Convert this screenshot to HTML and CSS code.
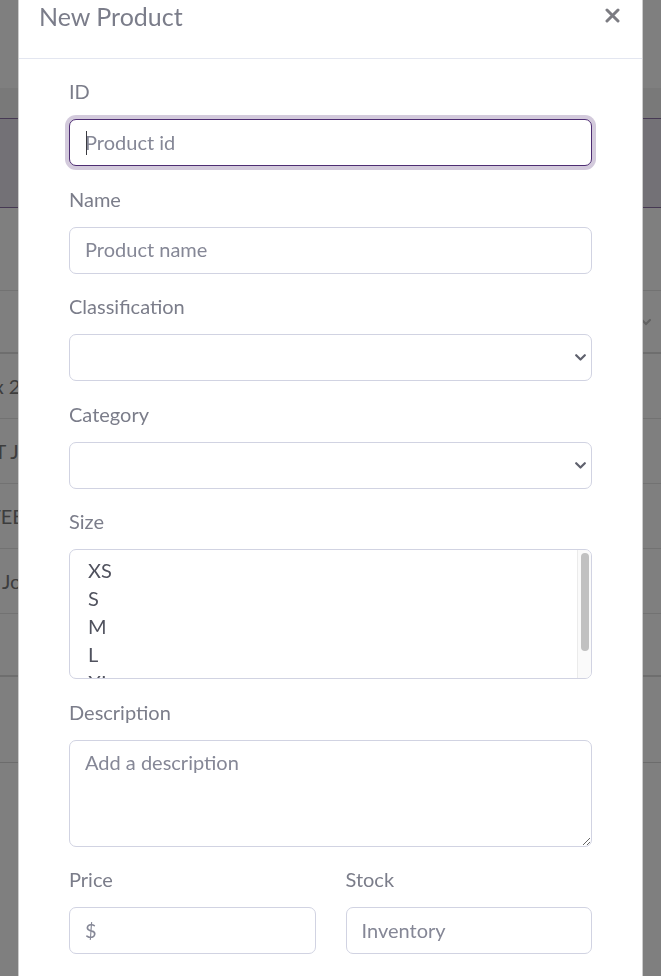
FILE: index.html
```html
<!DOCTYPE html>
<html lang="en">
<head>
<meta charset="utf-8">
<title>New Product</title>
<link rel="stylesheet" href="styles.css">
</head>
<body>
<div class="page">
  <div class="topbar"></div>
  <div class="subbar"></div>
  <div class="band"></div>
  <div class="toolbar"></div>
  <div class="thead">
    <svg class="sort-icon" width="10" height="8" viewBox="0 0 10 8"><path d="M1 2 L5 6 L9 2" fill="none" stroke="#c4c4c4" stroke-width="2.2" stroke-linecap="round"/></svg>
  </div>
  <div class="trow"><span class="cell r1">Box 2</span></div>
  <div class="trow"><span class="cell r2">SET JOGGER</span></div>
  <div class="trow"><span class="cell r3">TEE</span></div>
  <div class="trow"><span class="cell r4">Jogger</span></div>
  <div class="trow last"></div>
  <div class="tfoot"></div>
</div>

<div class="backdrop"></div>

<div class="modal" role="dialog" aria-labelledby="modalTitle">
  <div class="modal-content">
    <div class="modal-header">
      <h5 class="modal-title" id="modalTitle">New Product</h5>
      <button class="close" type="button" aria-label="Close">
        <svg width="15" height="15" viewBox="0 0 15 15"><path d="M2 2 L13 13 M13 2 L2 13" stroke="#7c7c82" stroke-width="3" stroke-linecap="round"/></svg>
      </button>
    </div>
    <div class="modal-body">
      <form class="form">
        <div class="form-group">
          <label class="label" for="pid">ID</label>
          <div class="field">
            <input class="control is-focused" id="pid" type="text" placeholder="Product id">
            <span class="caret"></span>
          </div>
        </div>
        <div class="form-group">
          <label class="label" for="pname">Name</label>
          <input class="control" id="pname" type="text" placeholder="Product name">
        </div>
        <div class="form-group">
          <label class="label" for="pclass">Classification</label>
          <div class="field">
            <select class="control select" id="pclass"><option></option></select>
            <svg class="chev" width="11" height="7" viewBox="0 0 11 7"><path d="M1.2 1.2 L5.5 5.5 L9.8 1.2" fill="none" stroke="#5f616d" stroke-width="2.2" stroke-linecap="round" stroke-linejoin="round"/></svg>
          </div>
        </div>
        <div class="form-group">
          <label class="label" for="pcat">Category</label>
          <div class="field">
            <select class="control select" id="pcat"><option></option></select>
            <svg class="chev" width="11" height="7" viewBox="0 0 11 7"><path d="M1.2 1.2 L5.5 5.5 L9.8 1.2" fill="none" stroke="#5f616d" stroke-width="2.2" stroke-linecap="round" stroke-linejoin="round"/></svg>
          </div>
        </div>
        <div class="form-group">
          <label class="label" id="sizeLabel">Size</label>
          <div class="listbox" role="listbox" aria-labelledby="sizeLabel" aria-multiselectable="true">
            <ul class="options">
              <li class="option" role="option">XS</li>
              <li class="option" role="option">S</li>
              <li class="option" role="option">M</li>
              <li class="option" role="option">L</li>
              <li class="option" role="option">XL</li>
            </ul>
            <div class="scrolltrack"><div class="scrollthumb"></div></div>
          </div>
        </div>
        <div class="form-group">
          <label class="label" for="pdesc">Description</label>
          <textarea class="control textarea" id="pdesc" rows="3" placeholder="Add a description"></textarea>
        </div>
        <div class="form-row">
          <div class="form-group">
            <label class="label" for="pprice">Price</label>
            <input class="control" id="pprice" type="text" placeholder="$">
          </div>
          <div class="form-group">
            <label class="label" for="pstock">Stock</label>
            <input class="control" id="pstock" type="text" placeholder="Inventory">
          </div>
        </div>
      </form>
    </div>
  </div>
</div>
</body>
</html>
```

FILE: styles.css
```css
html, body {
  margin: 0;
  padding: 0;
  overflow: hidden;
  height: 100%;
}
body {
  font-family: Lato, "Noto Sans", sans-serif;
  background: #fff;
  color: #858796;
}

/* underlying page */
.page {
  width: 100%;
}
.topbar { height: 88px; background: #fff; }
.subbar { height: 30px; background: #f3f3f3; }
.band {
  height: 88px;
  background: #e6e2ec;
  border-top: 1px solid #8c72a6;
  border-bottom: 1px solid #8c72a6;
}
.toolbar { height: 82px; border-bottom: 1px solid #e4e4e4; }
.thead {
  height: 61px;
  border-bottom: 2px solid #dcdcdc;
  display: flex;
  align-items: center;
  justify-content: flex-end;
  padding-right: 10px;
}
.trow {
  height: 64px;
  border-bottom: 1px solid #e4e4e4;
  display: flex;
  align-items: center;
  font-size: 20px;
  color: #7a7a7a;
  white-space: nowrap;
  overflow: hidden;
}
.trow.last { height: 61px; border-bottom: 2px solid #dcdcdc; }
.tfoot { height: 85px; border-bottom: 1px solid #d8d8d8; }
.cell { display: block; }
.r1 { margin-left: -30px; }
.r2 { margin-left: -28px; }
.r3 { margin-left: -11px; }
.r4 { margin-left: 2px; }

.backdrop {
  position: fixed;
  inset: 0;
  background: rgba(0, 0, 0, 0.5);
}

/* modal */
.modal {
  position: absolute;
  top: -21px;
  left: 18px;
  width: 625px;
}
.modal-content {
  background: #fff;
  border: 1px solid rgba(0, 0, 0, 0.2);
  border-radius: 6px;
  box-sizing: border-box;
}
.modal-header {
  display: flex;
  align-items: flex-start;
  padding: 18px 20px 22.5px;
  border-bottom: 1px solid #e3e6f0;
}
.modal-title {
  margin: 0;
  font-size: 25px;
  line-height: 37.5px;
  font-weight: 400;
  color: #7b7d8a;
}
.close {
  margin-left: auto;
  padding: 10px 2px 0 0;
  border: 0;
  background: none;
  line-height: 0;
  cursor: pointer;
}

.modal-body {
  padding: 20px 50px 20px;
}
.form { margin: 0; }
.form-group { margin-bottom: 20.5px; }
.form-row {
  display: grid;
  grid-template-columns: 1fr 1fr;
  column-gap: 30px;
}
.label {
  display: block;
  font-size: 20px;
  line-height: 24px;
  margin-bottom: 16px;
  color: #7b7d8a;
}
.field { position: relative; }

.control {
  display: block;
  width: 100%;
  height: 47px;
  box-sizing: border-box;
  padding: 6px 15px 8px;
  font-family: Lato, "Noto Sans", sans-serif;
  font-size: 20px;
  color: #6e707e;
  background: #fff;
  border: 1px solid #d1d3e2;
  border-radius: 7px;
  outline: none;
  margin: 0;
}
.control::placeholder { color: #858796; opacity: 1; }
.control.is-focused {
  border-color: #4e2d73;
  box-shadow: 0 0 0 4px rgba(78, 45, 115, 0.25);
}
.caret {
  position: absolute;
  left: 17px;
  top: 12px;
  width: 1px;
  height: 24px;
  background: #3a3a40;
}
.select {
  -webkit-appearance: none;
  appearance: none;
}
.chev {
  position: absolute;
  right: 6px;
  top: 20px;
}

.listbox {
  position: relative;
  height: 130px;
  box-sizing: border-box;
  border: 1px solid #d1d3e2;
  border-radius: 7px;
  overflow: hidden;
}
.options {
  list-style: none;
  margin: 0;
  padding: 6px 0 0 18px;
}
.option {
  font-size: 20px;
  line-height: 28px;
  color: #50525e;
}
.scrolltrack {
  position: absolute;
  top: 0;
  bottom: 0;
  right: 0;
  width: 13px;
  background: #fafafa;
  border-left: 1px solid #ebebeb;
}
.scrollthumb {
  margin: 3px 0 0 3px;
  width: 8px;
  height: 98px;
  border-radius: 4px;
  background: #c1c1c1;
}

.textarea {
  height: 107px;
  padding: 6px 15px 9px;
  line-height: 30px;
  resize: vertical;
}
```
